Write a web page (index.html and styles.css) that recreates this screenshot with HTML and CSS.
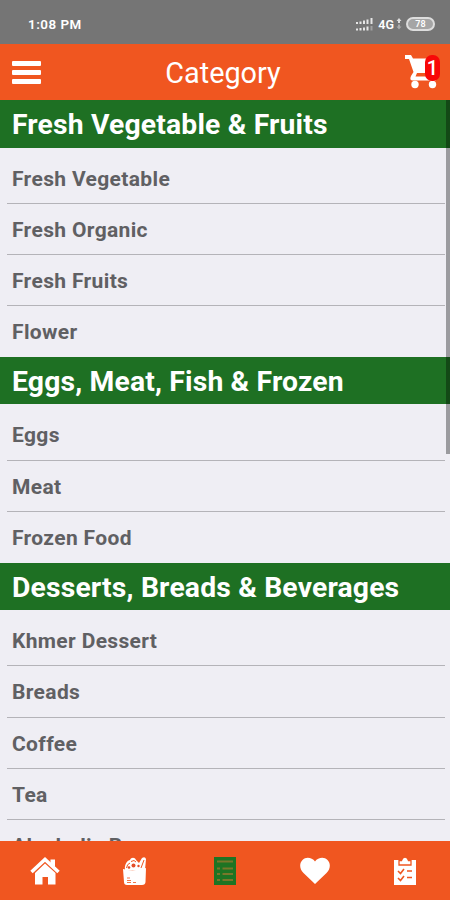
FILE: index.html
```html
<!DOCTYPE html>
<html lang="en">
    <head>
        <meta charset="utf-8">
        <title>Category</title>
        <link rel="stylesheet" href="styles.css">
    </head>
    <body>
        <div class="status-bar">
            <span class="time">1:08 PM</span>
            <svg class="signal" width="18" height="13" viewBox="0 0 18 13" stroke="#e6e6e6" stroke-width="2">
                <path d="M1 6V4M4.5 6V3.5M8 6V2.5M11.500 6V1.500M15.500 6V0M1 12.500V10.500M4.500 12.500V10M8 12.500V9.500M11.500 12.500V8.500"/>
                <path d="M15.500 12.500V8" stroke="#a0a0a0"/>
            </svg>
            <span class="network">4G</span>
            <svg class="arrows" width="6" height="12" viewBox="0 0 6 12" fill="#ddd">
                <path d="M3 0L5.500 3H4V5H2V3H.500z"/>
                <path d="M2 6.500H4V8.500H5.500L3 11.500L.500 8.500H2z" fill="#aaa"/>
            </svg>
            <span class="battery">78</span>
        </div>
        <div class="top-bar">
            <div class="menu"><i></i><i></i><i></i></div>
            <div class="title">Category</div>
            <div class="cart">
                <svg width="34" height="34" viewBox="0 0 34 34" fill="#fff">
                    <path d="M0 0H6L8 3.500H29L24 18H12L10.500 21.500H31V25.500H8Q4 25.500 6 21L8.500 17L4 4H0z"/>
                    <circle cx="10" cy="29.500" r="3.700"/>
                    <circle cx="27.500" cy="29.500" r="3.700"/>
                </svg>
                <span class="badge">1</span>
            </div>
        </div>
        <div class="content">
            <h2>Fresh Vegetable &amp; Fruits</h2>
            <ul>
                <li>Fresh Vegetable</li>
                <li>Fresh Organic</li>
                <li>Fresh Fruits</li>
                <li>Flower</li>
            </ul>
            <h2>Eggs, Meat, Fish &amp; Frozen</h2>
            <ul>
                <li>Eggs</li>
                <li>Meat</li>
                <li>Frozen Food</li>
            </ul>
            <h2>Desserts, Breads &amp; Beverages</h2>
            <ul>
                <li>Khmer Dessert</li>
                <li>Breads</li>
                <li>Coffee</li>
                <li>Tea</li>
                <li>Alcoholic Beverages</li>
            </ul>
            <div class="scrollbar"></div>
        </div>
        <div class="nav">
            <div class="tab">
                <svg width="30" height="28" viewBox="0 0 30 28">
                    <path d="M1.500 15L15 2.500L28.500 15" fill="none" stroke="#fff" stroke-width="3.500"/>
                    <path d="M20.500 2.500H25V10L20.500 6z" fill="#fff"/>
                    <path d="M15 6.500L25.500 16V27.500H18V20H12.500V27.500H5V16z" fill="#fff"/>
                </svg>
            </div>
            <div class="tab">
                <svg width="26" height="30" viewBox="0 0 26 30">
                    <path d="M3 14C2 8 6 4 8 4C9 1 13 1 14 4L17 7L20 2Q23 0 24 3L23 14z" fill="#fff"/>
                    <path d="M4.500 12Q5 8 8 7M9 5.500L12 4.500L14 6M19 12L22 4" fill="none" stroke="#ef5620" stroke-width="1"/>
                    <circle cx="11.500" cy="9.500" r="2" fill="#e34e29"/>
                    <circle cx="7" cy="11.500" r="1.300" fill="#e34e29"/>
                    <circle cx="16.500" cy="10" r="1.200" fill="#e34e29"/>
                    <path d="M1 13Q12 16 24 12L23.500 26Q23.300 29 20 29H5Q2 29 2 26z" fill="#fff"/>
                    <path d="M5 22H8M5 24.500H9M5 26.500H9M11 26.500H14" stroke="#f2764a" stroke-width="1"/>
                </svg>
            </div>
            <div class="tab">
                <svg width="22" height="28" viewBox="0 0 22 28">
                    <path d="M0 0H22V28H0z" fill="#1e7423"/>
                    <path d="M3 4.500H19M3 11.500H6M8.500 11.500H19M3 17H6M8.500 17H19M3 23H6M8.500 23H19" stroke="#79772a" stroke-width="2.200"/>
                </svg>
            </div>
            <div class="tab">
                <svg width="30" height="28" viewBox="0 0 30 28">
                    <path d="M15 27L3.500 16C-1 11.500-.500 6 2.500 3C6-.500 12 .500 15 4.500C18 .500 24-.500 27.500 3C30.500 6 31 11.500 26.500 16z" fill="#fff"/>
                </svg>
            </div>
            <div class="tab">
                <svg width="24" height="30" viewBox="0 0 24 30">
                    <path d="M1 4H23V29H1z" fill="#fff"/>
                    <path d="M6 9V4.500H8.500Q9.500 1 12 1T15.500 4.500H18V9z" fill="#fff" stroke="#ef5620" stroke-width="1.300"/>
                    <path d="M5 15L7.500 17.500L11 13M14 15H19M5 22L7.500 24.500L11 20M14 21.500H19" fill="none" stroke="#ef5620" stroke-width="1.600"/>
                </svg>
            </div>
        </div>
    </body>
</html>
```

FILE: styles.css
```css
* {
    box-sizing: border-box;
}
body {
    margin: 0;
    height: 900px;
    display: flex;
    flex-direction: column;
    overflow: hidden;
    background-color: #efeef4;
    font-family: Roboto, "Liberation Sans", sans-serif;
}
.status-bar {
    height: 44px;
    flex: none;
    display: flex;
    align-items: center;
    padding: 4px 15px 0 28px;
    background-color: #757575;
    color: #fff;
    font-size: 13.4px;
    font-weight: 600;
}
.time {
    flex: 1;
    letter-spacing: 0.5px;
}
.network {
    margin: 0 2px 0 4px;
    font-size: 12.5px;
}
.battery {
    width: 29px;
    height: 14px;
    margin-left: 4px;
    border: 2px solid #ddd;
    border-radius: 7px;
    background-color: #a5a5a5;
    font-size: 9px;
    line-height: 10px;
    text-align: center;
}
.top-bar {
    height: 56px;
    flex: none;
    display: flex;
    align-items: center;
    justify-content: space-between;
    padding: 0 10px 0 12px;
    background-color: #f05620;
    color: #fff;
}
.menu {
    width: 29px;
    display: grid;
    gap: 4px;
}
.menu i {
    width: 29px;
    height: 5px;
    border-radius: 1px;
    background-color: #fff;
}
.title {
    font-size: 28.8px;
    line-height: 56px;
    padding-top: 2px;
}
.cart {
    width: 35px;
    height: 34px;
    position: relative;
}
.badge {
    position: absolute;
    top: 0;
    right: 0;
    width: 15px;
    height: 26px;
    border-radius: 7px;
    background-color: #f80808;
    font-size: 20px;
    font-weight: 500;
    line-height: 27px;
    text-align: center;
}
.content {
    flex: 1;
    min-height: 0;
    position: relative;
    overflow: hidden;
}
h2 {
    height: 47.5px;
    margin: 0 0 5px;
    padding-left: 12px;
    background-color: #1e7023;
    color: #fff;
    font-size: 28.3px;
    font-weight: 700;
    letter-spacing: 0.17px;
    line-height: 49px;
}
ul {
    margin: 0;
    padding: 0 5px 0 7px;
    list-style: none;
}
li {
    height: 51.3px;
    padding-left: 5px;
    border-bottom: 1px solid #b4b3b8;
    color: #606063;
    font-size: 21px;
    font-weight: 700;
    letter-spacing: 0.35px;
    line-height: 53px;
}
li:last-child {
    height: 50.6px;
    border-bottom: 0;
}
.scrollbar {
    position: absolute;
    top: 0;
    right: 0;
    width: 4px;
    height: 354px;
    background-color: rgba(0, 0, 0, 0.35);
}
.nav {
    height: 59px;
    flex: none;
    display: flex;
    align-items: center;
    background-color: #f05620;
}
.tab {
    flex: 1;
    display: flex;
    justify-content: center;
}
```
